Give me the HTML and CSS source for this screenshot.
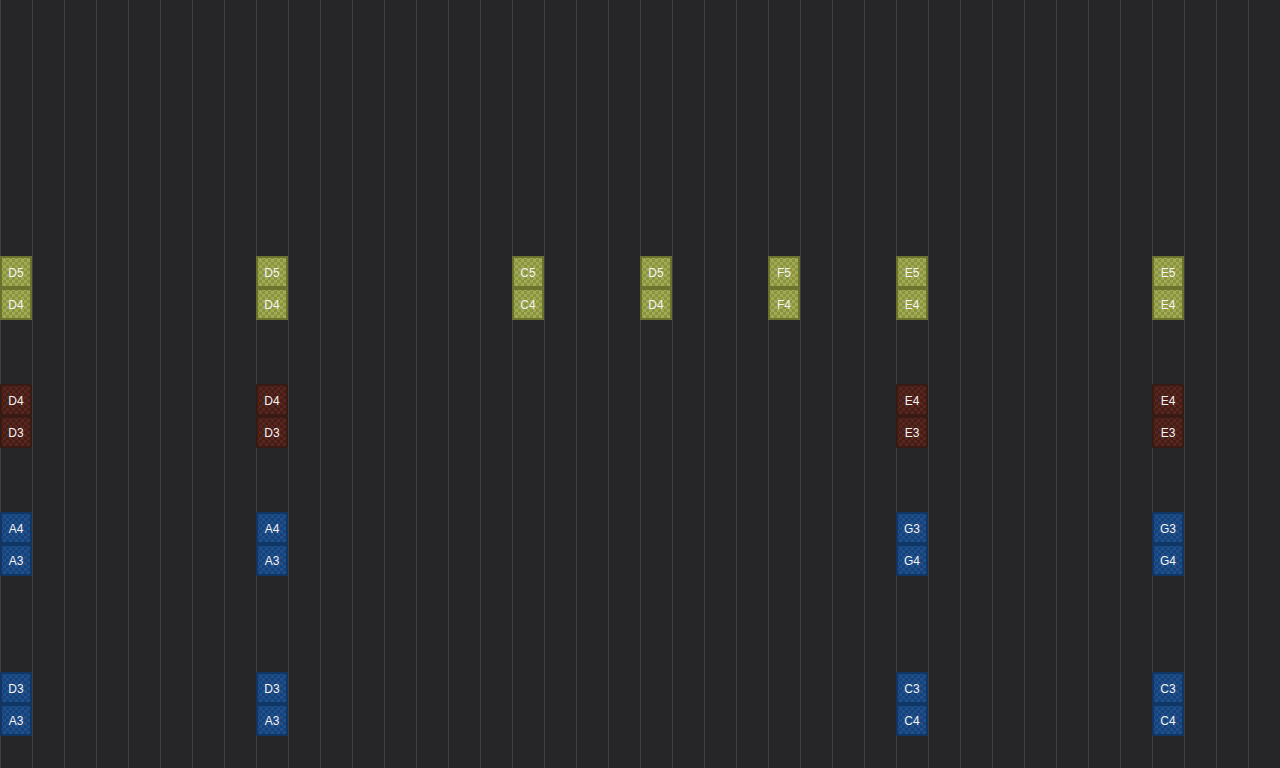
FILE: index.html
```html
<!DOCTYPE html>
<html lang="en">
<head>
  <meta charset="UTF-8">
  <title>Pattern</title>
  <link rel="stylesheet" href="styles.css">
</head>
<body>
<div class="roll" id="roll"></div>
<script>
  // [column, row, label, kind]
  const notes = [
    [1,9,'D5','lead'],[1,10,'D4','lead'],[9,9,'D5','lead'],[9,10,'D4','lead'],
    [17,9,'C5','lead'],[17,10,'C4','lead'],[21,9,'D5','lead'],[21,10,'D4','lead'],
    [25,9,'F5','lead'],[25,10,'F4','lead'],[29,9,'E5','lead'],[29,10,'E4','lead'],
    [37,9,'E5','lead'],[37,10,'E4','lead'],
    [1,13,'D4','bass'],[1,14,'D3','bass'],[9,13,'D4','bass'],[9,14,'D3','bass'],
    [29,13,'E4','bass'],[29,14,'E3','bass'],[37,13,'E4','bass'],[37,14,'E3','bass'],
    [1,17,'A4','pad'],[1,18,'A3','pad'],[9,17,'A4','pad'],[9,18,'A3','pad'],
    [29,17,'G3','pad'],[29,18,'G4','pad'],[37,17,'G3','pad'],[37,18,'G4','pad'],
    [1,22,'D3','pad'],[1,23,'A3','pad'],[9,22,'D3','pad'],[9,23,'A3','pad'],
    [29,22,'C3','pad'],[29,23,'C4','pad'],[37,22,'C3','pad'],[37,23,'C4','pad']
  ];
  const roll = document.getElementById('roll');
  notes.forEach(([col, row, label, kind]) => {
    const el = document.createElement('div');
    el.className = 'note note-' + kind;
    el.style.gridColumn = col;
    el.style.gridRow = row;
    el.textContent = label;
    roll.appendChild(el);
  });
</script>
</body>
</html>
```

FILE: styles.css
```css
html, body {
  margin: 0;
  padding: 0;
  background: #262628;
  overflow: hidden;
}
.roll {
  width: 1280px;
  height: 768px;
  display: grid;
  grid-template-columns: repeat(40, 32px);
  grid-template-rows: repeat(24, 32px);
  background-color: #262628;
  background-image: repeating-linear-gradient(to right, #404042 0, #404042 1px, transparent 1px, transparent 32px);
  font-family: "Liberation Sans", Arial, sans-serif;
}
.note {
  box-sizing: border-box;
  display: flex;
  align-items: center;
  justify-content: center;
  padding-top: 1px;
  font-size: 12px;
  color: #f4f4f4;
  border: 2px solid;
  background-size: 6px 6px;
  background-position: 1px 1px;
}
.note-lead {
  border-color: #6a722e;
  background-color: #929c42;
  background-image: conic-gradient(#8a9440 25%, #a0aa52 0 50%, #8a9440 0 75%, #a0aa52 0);
}
.note-bass {
  border-color: #381a14;
  background-color: #4c1f18;
  background-image: conic-gradient(#451c16 25%, #57261e 0 50%, #451c16 0 75%, #57261e 0);
}
.note-pad {
  border-color: #123664;
  background-color: #1a4780;
  background-image: conic-gradient(#17417a 25%, #20508a 0 50%, #17417a 0 75%, #20508a 0);
}
```
